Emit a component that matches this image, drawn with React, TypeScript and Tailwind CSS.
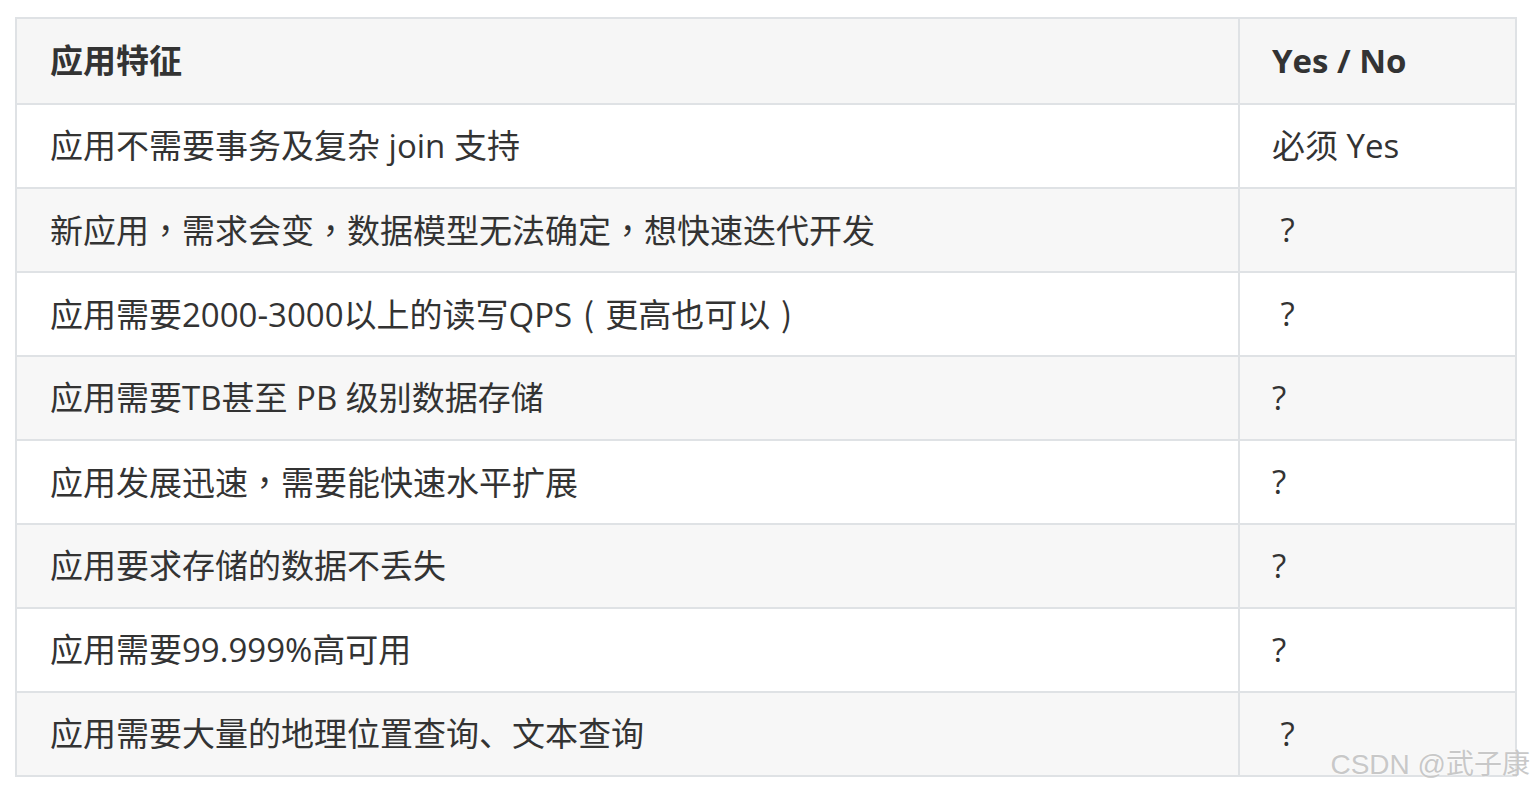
const rows: [string, string][] = [
  ['应用不需要事务及复杂 join 支持', '必须 Yes'],
  ['新应用，需求会变，数据模型无法确定，想快速迭代开发', '\u00a0?'],
  ['应用需要2000-3000以上的读写QPS（更高也可以）', '\u00a0?'],
  ['应用需要TB甚至 PB 级别数据存储', '?'],
  ['应用发展迅速，需要能快速水平扩展', '?'],
  ['应用要求存储的数据不丢失', '?'],
  ['应用需要99.999%高可用', '?'],
  ['应用需要大量的地理位置查询、文本查询', '\u00a0?'],
];

// full-width punctuation sits centred in its box in the reference
function Cjk({ text }: { text: string }) {
  return (
    <>
      {text.split(/([，（）])/).map((part, i) => {
        if (part === '，')
          return (
            <span key={i} className="font-['Noto_Sans_CJK_TC',sans-serif]">
              {part}
            </span>
          );
        if (part === '（' || part === '）')
          return (
            <span key={i} className="inline-block w-[1em] text-center font-['Noto_Sans_CJK_SC',sans-serif]">
              {part === '（' ? '(' : ')'}
            </span>
          );
        return part;
      })}
    </>
  );
}

export default function App() {
  return (
    <div className="relative w-[1534px] h-[792px] bg-white pt-[17px] pl-[15px] font-['Open_Sans','Noto_Sans_CJK_SC',sans-serif] text-[#333]">
      <table className="w-[1502px] border-collapse border-2 border-[#dfe2e5] text-[33px] table-fixed">
        <colgroup>
          <col className="w-[1223px]" />
          <col />
        </colgroup>
        <thead>
          <tr className="h-[86px] bg-[#f6f6f6]">
            <th className="border-2 border-[#dfe2e5] pl-[33px] text-left font-bold">应用特征</th>
            <th className="border-2 border-[#dfe2e5] pl-[32px] text-left font-bold">Yes / No</th>
          </tr>
        </thead>
        <tbody>
          {rows.map(([feature, answer], i) => (
            <tr key={i} className={`h-[84px] ${i % 2 === 0 ? 'bg-white' : 'bg-[#f7f7f7]'}`}>
              <td className="border-2 border-[#dfe2e5] pl-[33px]">
                <Cjk text={feature} />
              </td>
              <td className="border-2 border-[#dfe2e5] pl-[32px]">{answer}</td>
            </tr>
          ))}
        </tbody>
      </table>

      {/* watermark */}
      <div className="absolute right-[4px] top-[744px] text-[28px] text-[#c8c8c8] font-['Liberation_Sans','Noto_Sans_CJK_SC',sans-serif] [text-shadow:0_0_2px_#fff]">
        CSDN @武子康
      </div>
    </div>
  );
}
